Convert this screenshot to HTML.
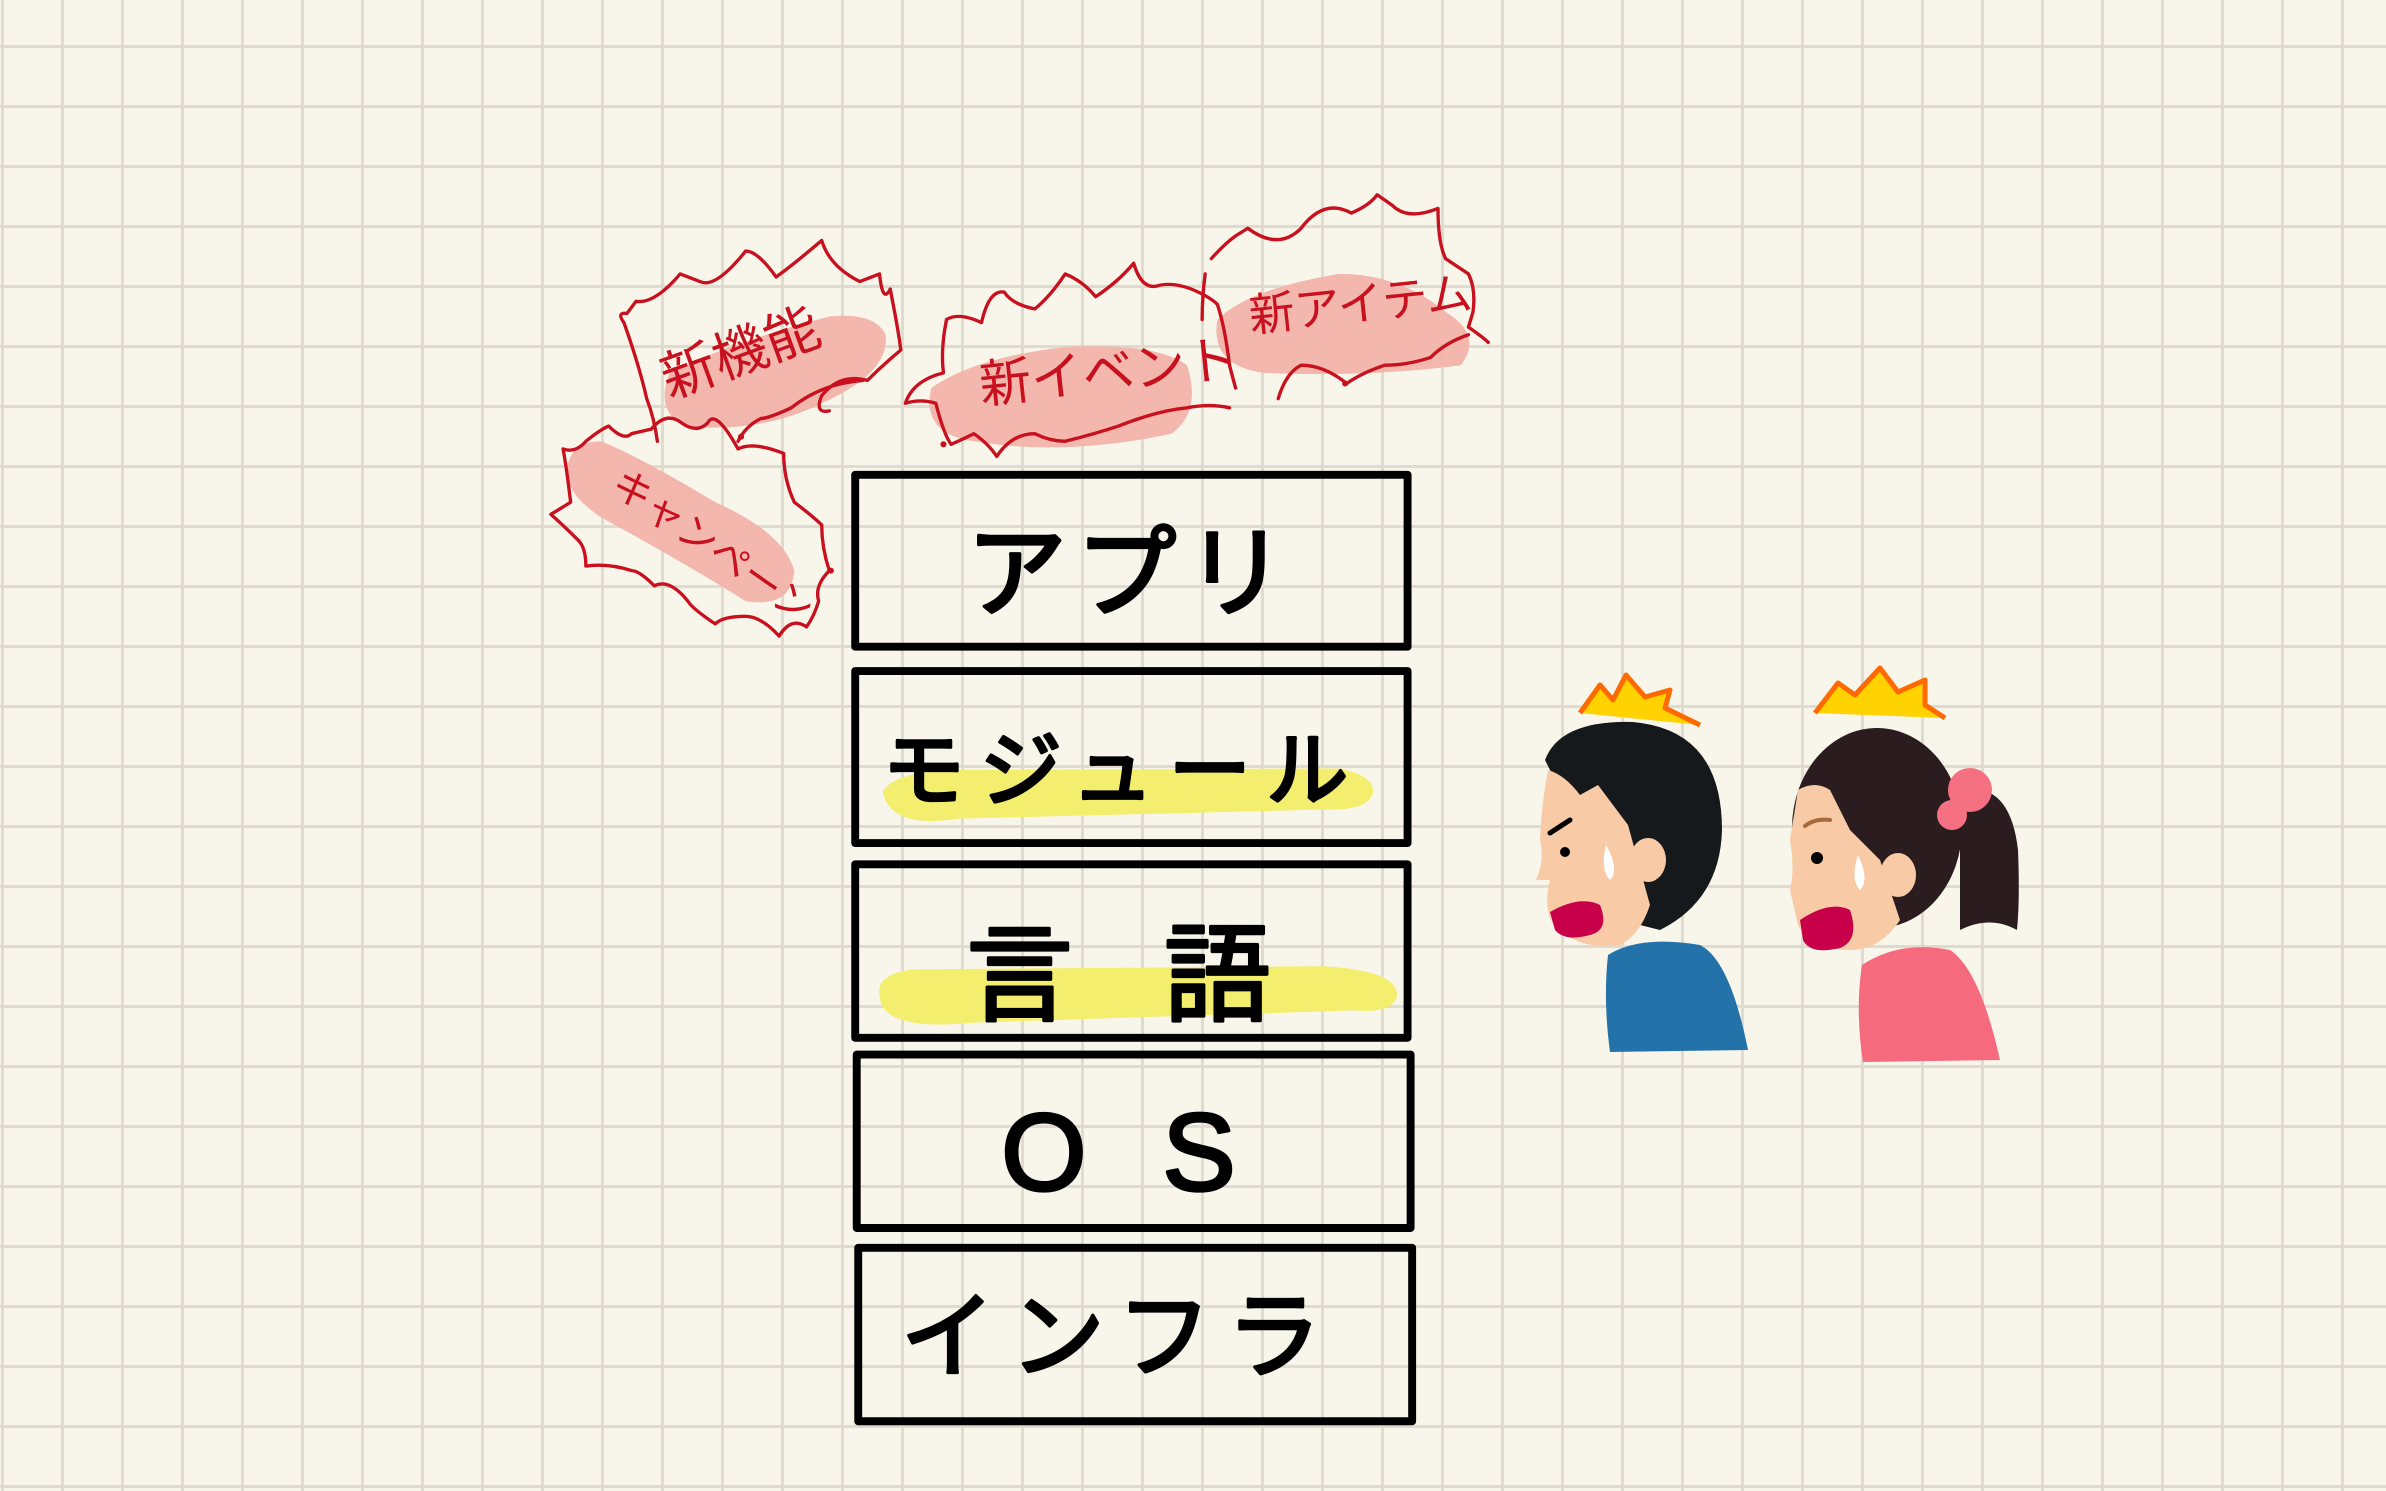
<!DOCTYPE html>
<html><head><meta charset="utf-8"><style>
html,body{margin:0;padding:0;}
body{width:2386px;height:1491px;overflow:hidden;background-color:#f8f6ea;
background-image:linear-gradient(to right,#dfdccf 0,#dfdccf 3px,transparent 3px),linear-gradient(to bottom,#dfdccf 0,#dfdccf 3px,transparent 3px);
background-size:60px 60px;background-position:1px 45px;}
svg{position:absolute;left:0;top:0;}
.bx{font-family:"Liberation Sans","Noto Sans CJK JP",sans-serif;font-weight:400;fill:#000;stroke:#000;stroke-width:2.2;stroke-linejoin:round;}
.rd{font-family:"Liberation Sans","Noto Sans CJK JP",sans-serif;fill:#c8101e;font-weight:400;}
</style></head><body>
<svg width="2386" height="1491" viewBox="0 0 2386 1491">
<g transform="scale(1.5217)">
<g fill="#f2b3aa" opacity="0.95">
<path d="M440,245 Q430,270 450,280 Q500,285 540,265 Q585,245 582,220 Q575,205 545,208 Q480,225 440,245Z"/>
<path d="M612,255 Q605,285 640,290 Q700,300 770,285 Q790,270 780,240 Q760,225 700,228 Q640,235 612,255Z"/>
<path d="M800,210 Q795,240 830,245 Q900,248 960,240 Q975,220 950,205 Q920,180 880,180 Q820,190 800,210Z"/>
<path d="M375,300 Q365,320 395,340 Q450,370 490,395 Q520,400 522,375 Q515,350 470,330 Q420,300 395,290 Q380,290 375,300Z"/>
</g>
<g fill="none" stroke="#c8101e" stroke-width="2.2" stroke-linejoin="round" stroke-linecap="round">
<path d="M585,190 Q580,200 578,180 L565,185 Q545,175 540,158 Q520,175 510,182 Q498,165 490,165 Q470,190 460,185 L447,180 Q430,200 418,198 L412,206 Q405,205 410,212 Q420,240 425,262 Q430,275 432,290"/>
<path d="M585,190 Q590,215 592,230 Q580,240 570,250 Q552,245 540,260 Q535,272 545,270 M567,250 Q540,252 520,268 Q505,275 500,275 Q490,280 485,290"/>
<path d="M812,255 Q810,248 808,240 Q805,215 800,200 Q795,195 783,190 Q770,185 760,188 Q750,190 745,173 Q735,185 720,195 Q712,185 700,180 Q690,195 680,203 Q665,200 660,192 Q650,190 645,212 Q630,205 622,210 Q618,230 620,245 Q600,250 595,265 Q605,262 615,265 Q620,285 625,292 Q630,290 640,285 Q650,292 655,300 Q665,285 680,285 Q690,290 700,290 Q720,285 735,280 Q760,270 780,268 Q795,265 808,268"/>
<path d="M796,170 Q805,160 812,155 L820,150 Q840,165 855,150 Q870,130 888,140 Q900,135 905,128 L915,135 Q925,145 945,137 Q945,160 950,170 L965,180 Q970,190 968,205 L965,215 Q975,222 978,225 M965,220 Q950,225 940,235 Q925,240 910,240 Q895,245 885,252 Q870,240 855,240 Q845,245 840,262 M792,180 Q790,195 790,210"/>
<path d="M362,338 Q372,332 375,330 Q372,305 370,295 Q378,298 385,290 Q395,282 400,280 Q410,290 415,285 L428,282 Q438,270 448,278 Q458,285 465,278 Q470,268 485,295 Q495,290 515,298 Q515,315 522,330 Q535,340 540,345 Q540,360 545,375 Q535,385 538,395 Q535,405 530,412 Q520,405 512,418 Q500,405 490,405 Q475,405 470,410 Q455,400 452,395 Q440,380 430,385 Q420,375 415,375 Q400,370 385,372 Q385,360 380,355 Q370,345 362,338Z"/>
</g>
<circle cx="487" cy="287" r="2" fill="#c8101e"/>
<circle cx="620" cy="292" r="2" fill="#c8101e"/>
<circle cx="884" cy="252" r="2" fill="#c8101e"/>
<circle cx="546" cy="375" r="2" fill="#c8101e"/>
<text class="rd" x="440" y="262" font-size="36" transform="rotate(-20 440 262)">新機能</text>
<text class="rd" x="645" y="265" font-size="34" transform="rotate(-6 645 265)">新イベント</text>
<text class="rd" x="822" y="218" font-size="30" transform="rotate(-6 822 218)">新アイテム</text>
<text class="rd" x="400" y="322" font-size="26" transform="rotate(35 400 322)">キャンペーン</text>
<path d="M580,520 Q590,505 640,506 L880,505 Q905,510 902,522 Q898,533 870,532 L630,538 Q585,545 580,520Z" fill="#f4ee6e"/>
<path d="M578,655 Q575,640 600,637 L870,635 Q920,638 918,655 Q915,666 890,664 L640,672 Q580,678 578,655Z" fill="#f4ee6e"/>
<g fill="none" stroke="#000" stroke-width="5.2" stroke-linejoin="round">
<rect x="562" y="312" width="363" height="113"/>
<rect x="562" y="441" width="363" height="113"/>
<rect x="562" y="568" width="363" height="114"/>
<rect x="563" y="693" width="364" height="114"/>
<rect x="564" y="820" width="364" height="114"/>
</g>
<text class="bx" x="743" y="400" font-size="66" text-anchor="middle" letter-spacing="6">アプリ</text>
<text class="bx" x="738" y="525" font-size="54" text-anchor="middle" letter-spacing="10">モジュール</text>
<text class="bx" x="765" y="665" font-size="70" text-anchor="middle" letter-spacing="60">言語</text>
<text class="bx" x="760" y="782" font-size="72" text-anchor="middle" letter-spacing="50">OS</text>
<text class="bx" x="735" y="900" font-size="62" text-anchor="middle" letter-spacing="10">インフラ</text>
</g>
<g>
<path d="M1580,713 L1600,685 L1613,700 L1626,675 L1645,697 L1670,690 L1665,708 L1700,725" fill="#ffd200" stroke="#ff6a00" stroke-width="5" stroke-linejoin="round"/>
<path d="M1608,955 Q1640,935 1700,945 Q1730,960 1748,1050 L1610,1052 Q1603,1000 1608,955Z" fill="#2472aa"/>
<path d="M1545,760 Q1560,720 1633,722 Q1722,730 1722,830 Q1720,900 1660,930 L1640,925 Q1610,830 1560,790Z" fill="#16191b"/>
<path d="M1548,770 Q1565,775 1580,795 L1598,785 L1628,825 L1650,905 Q1640,935 1620,945 Q1590,950 1565,935 Q1540,920 1550,880 L1536,880 Q1545,860 1540,840 Q1542,800 1548,770Z" fill="#f8caa5"/>
<ellipse cx="1648" cy="860" rx="18" ry="22" fill="#f8caa5"/>
<path d="M1550,912 Q1580,895 1600,905 Q1610,930 1590,935 Q1565,942 1555,930Z" fill="#c8004a"/>
<path d="M1606,845 Q1600,870 1610,880 Q1620,870 1606,845Z" fill="#fff"/>
<circle cx="1565" cy="852" r="5" fill="#000"/>
<path d="M1550,833 L1570,820" stroke="#000" stroke-width="5" stroke-linecap="round"/>
</g>
<g>
<path d="M1815,713 L1838,683 L1855,695 L1880,668 L1898,692 L1925,680 L1925,705 L1945,718" fill="#ffd200" stroke="#ff6a00" stroke-width="5" stroke-linejoin="round"/>
<path d="M1862,965 Q1900,940 1950,950 Q1980,970 2000,1060 L1863,1062 Q1855,1010 1862,965Z" fill="#f56a7c"/>
<path d="M1960,790 Q2010,780 2018,850 Q2020,900 2017,930 Q1990,915 1960,930Z" fill="#2a1c1f"/>
<ellipse cx="1877" cy="828" rx="85" ry="100" fill="#2a1c1f"/>
<circle cx="1970" cy="790" r="22" fill="#f57080"/>
<circle cx="1952" cy="815" r="15" fill="#f57080"/>
<path d="M1798,790 Q1815,780 1830,790 L1850,830 L1880,860 L1900,920 Q1880,950 1850,950 Q1810,950 1798,925 L1790,890 Q1795,870 1790,840Z" fill="#f8caa5"/>
<ellipse cx="1898" cy="875" rx="18" ry="22" fill="#f8caa5"/>
<path d="M1800,920 Q1830,900 1850,910 Q1860,940 1840,948 Q1810,955 1803,940Z" fill="#c8004a"/>
<path d="M1858,855 Q1850,880 1860,890 Q1870,880 1858,855Z" fill="#fff"/>
<circle cx="1817" cy="858" r="6" fill="#000"/>
<path d="M1805,826 Q1815,818 1830,820" stroke="#a86a3a" stroke-width="4" fill="none" stroke-linecap="round"/>
</g>
</svg>
</body></html>
